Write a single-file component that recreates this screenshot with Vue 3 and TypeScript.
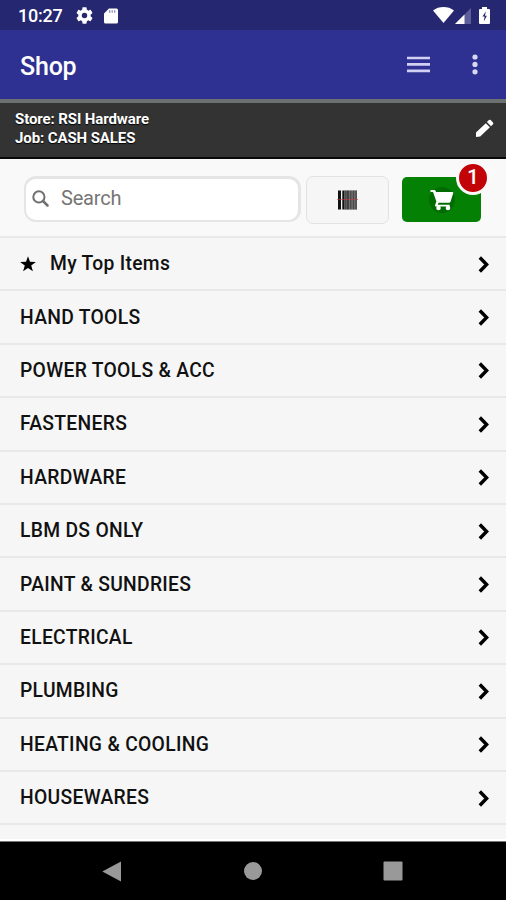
<script setup lang="ts">
interface Category {
  label: string
  starred?: boolean
}

const categories: Category[] = [
  { label: 'My Top Items', starred: true },
  { label: 'HAND TOOLS' },
  { label: 'POWER TOOLS & ACC' },
  { label: 'FASTENERS' },
  { label: 'HARDWARE' },
  { label: 'LBM DS ONLY' },
  { label: 'PAINT & SUNDRIES' },
  { label: 'ELECTRICAL' },
  { label: 'PLUMBING' },
  { label: 'HEATING & COOLING' },
  { label: 'HOUSEWARES' },
]
</script>

<template>
  <div class="screen">
    <div class="status">
      <span class="clock">10:27</span>
      <svg class="gear" viewBox="2 2 20 20"><path fill="#fff" d="M19.14 12.94c.04-.3.06-.61.06-.94s-.02-.64-.07-.94l2.03-1.58c.18-.14.23-.41.12-.61l-1.92-3.32c-.12-.22-.37-.29-.59-.22l-2.39.96c-.5-.38-1.03-.7-1.62-.94l-.36-2.54A.48.48 0 0 0 13.920 2.4h-3.84c-.24 0-.43.17-.47.41l-.36 2.54c-.59.24-1.13.57-1.62.94l-2.39-.96c-.22-.08-.47 0-.59.22L2.740 8.870c-.12.21-.08.47.12.61l2.030 1.580c-.05.3-.09.63-.09.94s.02.64.07.94l-2.030 1.580c-.18.14-.23.41-.12.61l1.920 3.320c.12.22.37.29.59.22l2.390-.96c.5.38 1.030.7 1.620.94l.36 2.540c.05.24.24.41.48.41h3.840c.24 0 .44-.17.47-.41l.36-2.540c.59-.24 1.130-.56 1.620-.94l2.390.96c.22.08.47 0 .59-.22l1.920-3.320c.12-.22.07-.47-.12-.61l-2.010-1.580zM12 15.200A3.200 3.200 0 1 1 12 8.800a3.200 3.200 0 0 1 0 6.400z" /></svg>
      <svg class="card" viewBox="0 0 14 16"><path fill="#fff" d="M5 .5h7.500A1.500 1.500 0 0 1 14 2v12a1.500 1.500 0 0 1-1.500 1.500h-11A1.500 1.500 0 0 1 0 14V5.500z" /><path d="M5.700 2.200v2.500M8.200 2.200v2.500M10.700 2.200v2.500" stroke="#8d8fc0" stroke-width="1.300" /></svg>
      <span class="grow"></span>
      <svg class="wifi" viewBox="0 0 21 16"><path fill="#fff" d="M0 3.500C6-1.100 15-1.100 21 3.500L10.500 16z" /></svg>
      <svg class="signal" viewBox="0 0 16 16"><path fill="#5d5f9a" d="M16 0v16H0z" /><path fill="#fff" d="M9.500 6.500V16H0z" /></svg>
      <svg class="battery" viewBox="0 0 11 17"><path fill="#fff" d="M3 0h5v2h2q1 0 1 1v13q0 1-1 1H1q-1 0-1-1V3q0-1 1-1h2z" /><path fill="#252870" d="M7 4.300 3.400 9.500h2.200l-.8 5L7.900 8.800H5.900z" /></svg>
    </div>

    <header class="appbar">
      <h1>Shop</h1>
      <svg class="menu" viewBox="0 0 23 17"><path d="M0 2h23M0 8.400h23M0 14.800h23" stroke="#d2d1f3" stroke-width="2.700" /></svg>
      <svg class="more" viewBox="0 0 6 21"><g fill="#d8d8f4"><circle cx="3" cy="3" r="2.600" /><circle cx="3" cy="10.400" r="2.600" /><circle cx="3" cy="17.800" r="2.600" /></g></svg>
    </header>

    <section class="context">
      <div class="lines">
        <div class="store">Store: RSI Hardware</div>
        <div class="job">Job: CASH SALES</div>
      </div>
      <svg class="pencil" viewBox="0 0 19 19"><path fill="#fff" d="M1 18v-4.400L10.800 4.200l4.100 4.100L5.200 17.600zM11.900 3.100l2-2q.9-.8 1.800 0l2.300 2.300q.8.9 0 1.800l-2 2z" /></svg>
    </section>

    <section class="toolbar">
      <div class="search">
        <svg class="lens" viewBox="0 0 17 17"><circle cx="6.900" cy="6.900" r="5.600" fill="none" stroke="#707070" stroke-width="2" /><path d="m11 11 4.500 4.500" stroke="#707070" stroke-width="2.500" stroke-linecap="round" /></svg>
        <span>Search</span>
      </div>
      <div class="scan">
        <svg class="barcode" viewBox="0 0 21 20"><path fill="#111" d="M1 .500h3v19H1zM5.300.500h2.400v19H5.300z" /><path fill="#777" d="M7.700.500H20v19H7.700z" /><path fill="#333" d="M8.400.500h1v19h-1zM10.200.500h1.500v19h-1.500z" /><path fill="#4c4c4c" d="M12.900.500h1.600v19h-1.600zM15.700.500h1.600v19h-1.600zM18.300.500h1.500v19h-1.500z" /><path d="M0 9.500h21" stroke="#c43a4a" stroke-opacity=".6" /></svg>
      </div>
      <div class="cart">
        <svg class="trolley" viewBox="0 0 28 28"><circle cx="14" cy="14" r="13" fill="#006b00" /><path fill="#fff" d="M2.500 4h4q.8 0 1.100.8l.4 1.200h16.400q1.200 0 .8 1.300l-2.700 8.400q-.3 1-1.400 1H10.600l-.9 2.100h12v1.800H8.300q-1.800 0-1.200-1.700l1.300-3.400L5 6H2.500z" /><circle cx="10.500" cy="22" r="2.300" fill="#fff" /><circle cx="20" cy="22" r="2.300" fill="#fff" /></svg>
        <span class="badge">1</span>
      </div>
    </section>

    <ul class="list">
      <li v-for="item in categories" :key="item.label">
        <svg v-if="item.starred" class="star" viewBox="0 0 16 16"><path d="m8 .2 2 5.600 5.900.1-4.700 3.600 1.700 5.800L8 11.900l-4.900 3.400 1.700-5.800L.1 5.900 6 5.800z" /></svg>
        <span class="label">{{ item.label }}</span>
        <svg class="chevron" viewBox="0 0 11 17"><path d="m1.800 1.500 6.800 7-6.800 7" fill="none" stroke="#000" stroke-width="3.400" /></svg>
      </li>
    </ul>

    <nav class="navbar">
      <svg class="back" viewBox="0 0 19 21"><path fill="#999" d="M19 .5v20L.300 10.500z" /></svg>
      <svg class="home" viewBox="0 0 18 18"><circle cx="9" cy="9" r="9" fill="#999" /></svg>
      <svg class="recent" viewBox="0 0 20 20"><rect x=".5" y=".5" width="19" height="19" rx="1" fill="#999" /></svg>
    </nav>
  </div>
</template>

<style>
body {
  margin: 0;
  overflow: hidden;
}
</style>

<style scoped>
.screen {
  display: flex;
  flex-direction: column;
  width: 506px;
  height: 900px;
  overflow: hidden;
  background: #f6f6f6;
  font-family: Roboto, sans-serif;
  color: #111;
}
svg {
  display: block;
  flex: none;
}
.status {
  display: flex;
  align-items: center;
  flex: none;
  box-sizing: border-box;
  height: 30px;
  padding: 1px 16px 0 18px;
  background: #252870;
  color: #fff;
}
.clock {
  width: 58px;
  font-size: 18px;
  font-weight: 500;
  line-height: 30px;
  letter-spacing: -0.25px;
}
.gear { width: 17px; height: 17px; }
.card { width: 14px; height: 16px; margin-left: 11px; }
.grow { flex: 1; }
.wifi { width: 21px; height: 16px; margin-bottom: 1px; }
.signal { width: 16px; height: 16px; margin-left: 1px; }
.battery { width: 11px; height: 17px; margin-left: 8px; margin-bottom: 1px; }
.appbar {
  display: flex;
  align-items: center;
  flex: none;
  box-sizing: border-box;
  height: 69px;
  padding: 0 28px 0 20px;
  background: #2f3192;
}
h1 {
  flex: 1;
  margin: 4px 0 0;
  color: #fff;
  font-size: 25px;
  font-weight: 500;
  line-height: 30px;
  letter-spacing: -0.2px;
}
.menu { width: 23px; height: 17px; }
.more { width: 6px; height: 21px; margin-left: 42px; }
.context {
  display: flex;
  justify-content: space-between;
  flex: none;
  box-sizing: border-box;
  height: 60px;
  padding: 7px 12px 0 15px;
  border-top: 4px solid #6c706f;
  border-bottom: 2px solid #080808;
  background: #333;
}
.lines {
  color: #fff;
  font-size: 15px;
  font-weight: 700;
  line-height: 18.5px;
  letter-spacing: -0.1px;
  text-shadow: 0 1px 1px #000;
}
.pencil { width: 19px; height: 19px; margin-top: 9px; }
.toolbar {
  display: flex;
  align-items: flex-start;
  flex: none;
  box-sizing: border-box;
  height: 79px;
  padding: 17px 25px 0 24px;
  border-bottom: 2px solid #e9e9e9;
  background: #f9f9f9;
}
.search {
  display: flex;
  align-items: center;
  box-sizing: border-box;
  width: 277px;
  height: 46px;
  padding: 0 7px 3px 6px;
  border: 2px solid #e5e5e5;
  border-top-width: 3px;
  border-right-width: 3px;
  border-radius: 12px;
  background: #fff;
  color: #757575;
  font-size: 20px;
  letter-spacing: -0.2px;
}
.lens { width: 17px; height: 17px; margin-right: 12px; }
.scan {
  display: flex;
  align-items: center;
  justify-content: center;
  box-sizing: border-box;
  width: 83px;
  height: 48px;
  margin-left: 5px;
  border: 1px solid #e2e2e2;
  border-radius: 7px;
  background: #f6f6f6;
}
.barcode { width: 21px; height: 20px; }
.cart {
  position: relative;
  display: flex;
  align-items: center;
  justify-content: center;
  width: 79px;
  height: 45px;
  margin: 1px 0 0 13px;
  border-radius: 5px;
  background: #048004;
}
.trolley { width: 28px; height: 28px; }
.badge {
  position: absolute;
  top: -16px;
  right: -9px;
  width: 28px;
  height: 28px;
  border: 3px solid #fafafa;
  border-radius: 50%;
  background: #c20409;
  color: #fff;
  font-size: 21px;
  font-weight: 500;
  line-height: 27px;
  text-align: center;
}
.list {
  flex: 1;
  min-height: 0;
  margin: 0;
  padding: 0;
  overflow: hidden;
  border-bottom: 2px solid #fff;
  list-style: none;
}
li {
  display: flex;
  align-items: center;
  box-sizing: border-box;
  height: 53.4px;
  padding: 1px 17px 0 20px;
  border-bottom: 2px solid #e8e8e8;
}
.star { width: 16px; height: 16px; margin-right: 14px; }
.label {
  flex: 1;
  font-size: 19.3px;
  font-weight: 500;
  line-height: 24px;
  letter-spacing: 0.3px;
}
.chevron { width: 11px; height: 17px; }
.navbar {
  display: flex;
  align-items: center;
  flex: none;
  box-sizing: border-box;
  height: 59px;
  padding: 0 102px;
  border-top: 1px solid #777;
  background: #000;
}
.back { width: 19px; height: 21px; }
.home { width: 18px; height: 18px; margin-left: 123px; }
.recent { width: 20px; height: 20px; margin-left: 121px; }
</style>
